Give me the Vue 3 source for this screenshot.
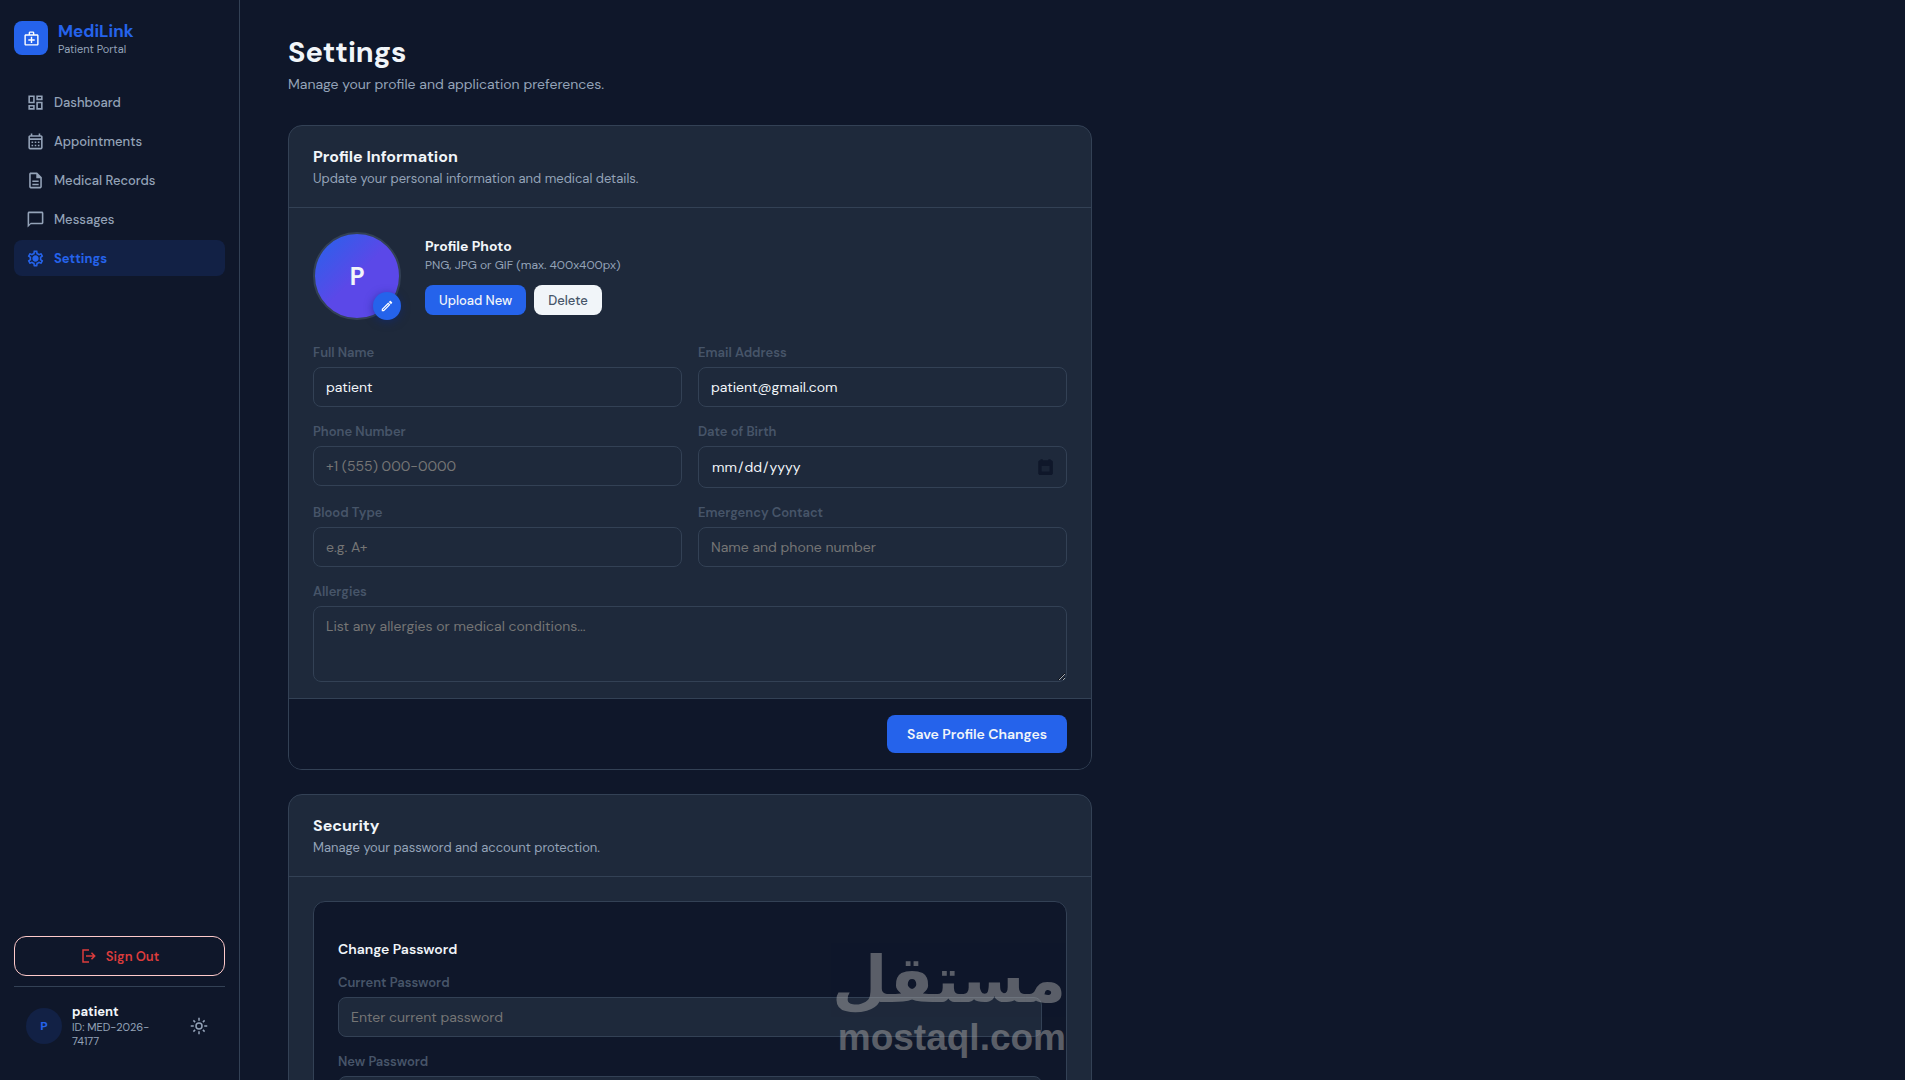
<template>
  <div class="layout">
    <aside class="sidebar">
      <div class="brand">
        <div class="brand-logo">
          <svg viewBox="0 0 24 24" width="17" height="17"><path :d="icons.medical" /></svg>
        </div>
        <div>
          <div class="brand-name">MediLink</div>
          <div class="brand-sub">Patient Portal</div>
        </div>
      </div>

      <nav class="nav">
        <a
          v-for="item in navItems"
          :key="item.label"
          href="#"
          class="nav-item"
          :class="{ active: item.active }"
        >
          <svg viewBox="0 0 24 24" width="19" height="19"><path :d="item.icon" /></svg>
          <span>{{ item.label }}</span>
        </a>
      </nav>

      <button type="button" class="sign-out">
        <svg viewBox="0 0 24 24" width="18" height="18"><path :d="icons.logout" /></svg>
        <span>Sign Out</span>
      </button>

      <div class="user">
        <div class="user-avatar">P</div>
        <div class="user-info">
          <div class="user-name">patient</div>
          <div class="user-id">ID: MED-2026-74177</div>
        </div>
        <button type="button" class="theme-toggle" aria-label="Toggle theme">
          <svg class="icon-line" viewBox="0 0 24 24" width="18" height="18">
            <circle cx="12" cy="12" r="4" />
            <path d="M12 1v4M12 19v4M1 12h4M19 12h4M4.500 4.500l2.300 2.300M17.200 17.200l2.300 2.300M19.500 4.500l-2.300 2.300M6.800 17.200l-2.300 2.300" />
          </svg>
        </button>
      </div>
    </aside>

    <main class="main">
      <div class="content">
        <h1>Settings</h1>
        <p class="page-sub">Manage your profile and application preferences.</p>

        <section class="card">
          <header class="card-header">
            <h2>Profile Information</h2>
            <p>Update your personal information and medical details.</p>
          </header>

          <div class="card-body">
            <div class="photo-row">
              <div class="photo">
                P
                <button type="button" class="photo-edit" aria-label="Edit photo">
                  <svg viewBox="0 0 24 24" width="14" height="14"><path :d="icons.edit" /></svg>
                </button>
              </div>
              <div>
                <h3 class="photo-title">Profile Photo</h3>
                <p class="photo-hint">PNG, JPG or GIF (max. 400x400px)</p>
                <div class="photo-actions">
                  <button type="button" class="btn btn-primary">Upload New</button>
                  <button type="button" class="btn btn-light">Delete</button>
                </div>
              </div>
            </div>

            <div class="form-grid">
              <div v-for="field in fields" :key="field.id" class="field">
                <label :for="field.id">{{ field.label }}</label>
                <input
                  :id="field.id"
                  v-model="profile[field.id]"
                  :type="field.type"
                  :placeholder="field.placeholder"
                />
              </div>
              <div class="field field-full">
                <label for="allergies">Allergies</label>
                <textarea
                  id="allergies"
                  v-model="profile.allergies"
                  placeholder="List any allergies or medical conditions..."
                ></textarea>
              </div>
            </div>
          </div>

          <footer class="card-footer">
            <button type="button" class="btn btn-primary btn-save">Save Profile Changes</button>
          </footer>
        </section>

        <section class="card">
          <header class="card-header">
            <h2>Security</h2>
            <p>Manage your password and account protection.</p>
          </header>

          <div class="card-body">
            <div class="password-box">
              <h3>Change Password</h3>
              <div class="password-fields">
                <div class="field">
                  <label for="currentPassword">Current Password</label>
                  <input id="currentPassword" type="password" placeholder="Enter current password" />
                </div>
                <div class="field">
                  <label for="newPassword">New Password</label>
                  <input id="newPassword" type="password" placeholder="Enter new password" />
                </div>
              </div>

              <div class="watermark">
                <div class="watermark-ar" lang="ar" dir="rtl">مستقل</div>
                <div class="watermark-en">mostaql.com</div>
              </div>
            </div>
          </div>
        </section>
      </div>
    </main>
  </div>
</template>

<script setup>
import { reactive } from 'vue'

const icons = {
  medical:
    'M20 6h-4V4c0-1.1-.9-2-2-2h-4c-1.1 0-2 .9-2 2v2H4c-1.1 0-2 .9-2 2v12c0 1.1.9 2 2 2h16c1.1 0 2-.9 2-2V8c0-1.1-.9-2-2-2zM10 4h4v2h-4V4zm10 16H4V8h16v12zM13 9.5h-2V13H7.500v2H11v3.500h2V15h3.500v-2H13z',
  dashboard:
    'M19 5v2h-4V5h4M9 5v6H5V5h4m10 8v6h-4v-6h4M9 17v2H5v-2h4M21 3h-8v6h8V3zM11 3H3v10h8V3zm10 8h-8v10h8V11zm-10 4H3v6h8v-6z',
  calendar:
    'M19 4h-1V2h-2v2H8V2H6v2H5c-1.11 0-1.99.9-1.99 2L3 20c0 1.1.89 2 2 2h14c1.1 0 2-.9 2-2V6c0-1.1-.9-2-2-2zm0 16H5V10h14v10zm0-12H5V6h14v2zM9 14H7v-2h2v2zm4 0h-2v-2h2v2zm4 0h-2v-2h2v2zm-8 4H7v-2h2v2zm4 0h-2v-2h2v2zm4 0h-2v-2h2v2z',
  records:
    'M8 16h8v2H8zm0-4h8v2H8zm6-10H6c-1.1 0-2 .9-2 2v16c0 1.1.89 2 1.990 2H18c1.1 0 2-.9 2-2V8l-6-6zm4 18H6V4h7v5h5v11z',
  messages:
    'M20 2H4c-1.1 0-2 .9-2 2v18l4-4h14c1.1 0 2-.9 2-2V4c0-1.1-.9-2-2-2zm0 14H6l-2 2V4h16v12z',
  settings:
    'M19.43 12.98c.04-.32.07-.64.07-.98 0-.34-.03-.66-.07-.98l2.11-1.65c.19-.15.24-.42.12-.64l-2-3.46c-.09-.16-.26-.25-.44-.25-.06 0-.12.01-.17.03l-2.49 1c-.52-.4-1.08-.73-1.69-.98l-.38-2.65C14.46 2.18 14.25 2 14 2h-4c-.25 0-.46.18-.49.42l-.38 2.65c-.61.25-1.17.59-1.69.98l-2.49-1c-.06-.02-.12-.03-.18-.03-.17 0-.34.09-.43.25l-2 3.46c-.13.22-.07.49.12.64l2.11 1.65c-.04.32-.07.65-.07.98 0 .33.03.66.07.98l-2.11 1.65c-.19.15-.24.42-.12.64l2 3.46c.09.16.26.25.44.25.06 0 .12-.01.17-.03l2.49-1c.52.4 1.08.73 1.69.98l.38 2.65c.03.24.24.42.49.42h4c.25 0 .46-.18.49-.42l.38-2.65c.61-.25 1.17-.59 1.69-.98l2.49 1c.06.02.12.03.18.03.17 0 .34-.09.43-.25l2-3.46c.12-.22.07-.49-.12-.64l-2.11-1.65zm-1.98-1.71c.04.31.05.52.05.73 0 .21-.02.43-.05.73l-.14 1.13.89.7 1.08.84-.7 1.21-1.27-.51-1.04-.42-.9.68c-.43.32-.84.56-1.25.73l-1.06.43-.16 1.13-.2 1.35h-1.4l-.19-1.35-.16-1.13-1.06-.43c-.43-.18-.83-.41-1.23-.71l-.91-.7-1.06.43-1.27.51-.7-1.21 1.08-.84.89-.7-.14-1.13c-.03-.31-.05-.54-.05-.74s.02-.43.05-.73l.14-1.13-.89-.7-1.08-.84.7-1.21 1.27.51 1.04.42.9-.68c.43-.32.84-.56 1.25-.73l1.06-.43.16-1.13.2-1.35h1.39l.19 1.35.16 1.13 1.06.43c.43.18.83.41 1.23.71l.91.7 1.06-.43 1.27-.51.7 1.21-1.07.85-.89.7.14 1.13zM12 8c-2.21 0-4 1.79-4 4s1.79 4 4 4 4-1.79 4-4-1.79-4-4-4z',
  logout: 'M3 3h9v2H5v14h7v2H3zM16 7l5 5-5 5-1.400-1.400L17.200 13H8v-2h9.200l-2.600-2.600z',
  edit:
    'M14.060 9.020l.92.92L5.920 19H5v-.92l9.060-9.060M17.660 3c-.25 0-.51.1-.7.290l-1.830 1.830 3.750 3.750 1.830-1.830c.39-.39.39-1.020 0-1.410l-2.340-2.340c-.2-.2-.45-.29-.71-.29zm-3.600 3.190L3 17.250V21h3.750L17.810 9.940l-3.750-3.750z'
}

const navItems = [
  { label: 'Dashboard', icon: icons.dashboard },
  { label: 'Appointments', icon: icons.calendar },
  { label: 'Medical Records', icon: icons.records },
  { label: 'Messages', icon: icons.messages },
  { label: 'Settings', icon: icons.settings, active: true }
]

const profile = reactive({
  fullName: 'patient',
  email: 'patient@gmail.com',
  phone: '',
  birthDate: '',
  bloodType: '',
  emergency: '',
  allergies: ''
})

const fields = [
  { id: 'fullName', label: 'Full Name', type: 'text' },
  { id: 'email', label: 'Email Address', type: 'email' },
  { id: 'phone', label: 'Phone Number', type: 'tel', placeholder: '+1 (555) 000-0000' },
  { id: 'birthDate', label: 'Date of Birth', type: 'date' },
  { id: 'bloodType', label: 'Blood Type', type: 'text', placeholder: 'e.g. A+' },
  { id: 'emergency', label: 'Emergency Contact', type: 'text', placeholder: 'Name and phone number' }
]
</script>

<style>
body {
  margin: 0;
  background: #0f172a;
}
</style>

<style scoped>
* {
  box-sizing: border-box;
}

.layout {
  display: flex;
  height: 100vh;
  background: #0f172a;
  color: #f1f5f9;
  font-family: 'DM Sans', Inter, sans-serif;
  font-size: 13px;
}

h1,
h2,
h3,
p {
  margin: 0;
}

button,
input,
textarea {
  font-family: inherit;
}

button {
  cursor: pointer;
}

svg {
  display: block;
  flex-shrink: 0;
  fill: currentColor;
}

.icon-line {
  fill: none;
  stroke: currentColor;
  stroke-width: 2;
}

/* sidebar */
.sidebar {
  display: flex;
  flex-direction: column;
  flex-shrink: 0;
  width: 240px;
  padding: 20px 14px;
  border-right: 1px solid #334155;
}

.brand {
  display: flex;
  align-items: center;
  gap: 10px;
  margin-bottom: 28px;
}

.brand-logo {
  display: flex;
  align-items: center;
  justify-content: center;
  width: 34px;
  height: 34px;
  border-radius: 8px;
  background: #2563eb;
  color: #fff;
}

.brand-name {
  color: #2563eb;
  font-size: 17px;
  font-weight: 700;
  line-height: 22px;
}

.brand-sub {
  color: #94a3b8;
  font-size: 11px;
  line-height: 14px;
}

.nav {
  display: flex;
  flex: 1;
  flex-direction: column;
  gap: 3px;
}

.nav-item {
  display: flex;
  align-items: center;
  gap: 9px;
  height: 36px;
  padding: 0 12px;
  border-radius: 8px;
  color: #94a3b8;
  font-weight: 500;
  text-decoration: none;
}

.nav-item.active {
  background: #122145;
  color: #2563eb;
  font-weight: 700;
}

.sign-out {
  display: flex;
  align-items: center;
  justify-content: center;
  gap: 8px;
  height: 40px;
  border: 1px solid #fecaca;
  border-radius: 12px;
  background: transparent;
  color: #dc3c3c;
  font-size: 13px;
  font-weight: 600;
}

.user {
  display: flex;
  align-items: center;
  gap: 10px;
  margin-top: 10px;
  padding: 16px 12px 12px;
  border-top: 1px solid #334155;
}

.user-avatar {
  display: flex;
  align-items: center;
  justify-content: center;
  flex-shrink: 0;
  width: 36px;
  height: 36px;
  border-radius: 50%;
  background: #122145;
  color: #2563eb;
  font-size: 12px;
  font-weight: 700;
}

.user-info {
  flex: 1;
}

.user-name {
  font-weight: 700;
  line-height: 17px;
}

.user-id {
  color: #94a3b8;
  font-size: 11px;
  line-height: 14px;
}

.theme-toggle {
  padding: 5px;
  border: 0;
  background: transparent;
  color: #94a3b8;
}

/* main */
.main {
  flex: 1;
  overflow-y: auto;
  scrollbar-width: none;
}

.content {
  max-width: 900px;
  padding: 32px 48px;
}

h1 {
  font-size: 29px;
  font-weight: 700;
  line-height: 40px;
}

.page-sub {
  margin-bottom: 29px;
  color: #94a3b8;
  font-size: 14px;
  line-height: 24px;
}

.card {
  margin-bottom: 24px;
  overflow: hidden;
  border: 1px solid #334155;
  border-radius: 14px;
  background: #1e293b;
}

.card-header {
  padding: 20px 24px 18px;
  border-bottom: 1px solid #334155;
}

.card-header h2 {
  font-size: 16px;
  font-weight: 700;
  line-height: 22px;
}

.card-header p {
  color: #94a3b8;
  line-height: 21px;
}

.card-body {
  padding: 24px 24px 16px;
}

.card-footer {
  display: flex;
  justify-content: flex-end;
  padding: 16px 24px;
  border-top: 1px solid #334155;
  background: #0f172a;
}

.photo-row {
  display: flex;
  align-items: center;
  gap: 24px;
  margin-bottom: 24px;
}

.photo {
  position: relative;
  display: flex;
  align-items: center;
  justify-content: center;
  width: 88px;
  height: 88px;
  border: 2px solid #334155;
  border-radius: 50%;
  background: linear-gradient(135deg, #2563eb, #5b48e8 50%, #5b48e8);
  font-size: 24px;
  font-weight: 700;
}

.photo-edit {
  position: absolute;
  right: -2px;
  bottom: -2px;
  display: flex;
  align-items: center;
  justify-content: center;
  width: 28px;
  height: 28px;
  padding: 0;
  border: 0;
  border-radius: 50%;
  background: #2563eb;
  box-shadow: 0 2px 8px rgba(15, 40, 120, 0.6);
  color: #fff;
}

.photo-title {
  font-size: 14px;
  font-weight: 700;
  line-height: 18px;
}

.photo-hint {
  margin-bottom: 10px;
  color: #94a3b8;
  font-size: 12px;
  line-height: 20px;
}

.photo-actions {
  display: flex;
  gap: 8px;
}

.btn {
  height: 30px;
  padding: 0 14px;
  border: 0;
  border-radius: 8px;
  font-size: 13px;
  font-weight: 500;
}

.btn-primary {
  background: #2563eb;
  color: #f1f5f9;
}

.btn-light {
  background: #f1f5f9;
  color: #475569;
}

.btn-save {
  height: 38px;
  padding: 0 20px;
  font-size: 14px;
  font-weight: 600;
}

.form-grid {
  display: grid;
  grid-template-columns: 1fr 1fr;
  align-items: start;
  gap: 16px;
}

.field {
  display: flex;
  flex-direction: column;
  gap: 6px;
}

.field-full {
  grid-column: 1 / -1;
}

.field label {
  color: #475569;
  font-size: 13px;
  font-weight: 600;
  line-height: 17px;
}

.field input,
.field textarea {
  width: 100%;
  height: 40px;
  padding: 0 12px;
  border: 1px solid #334155;
  border-radius: 8px;
  background: #1e293b;
  color: #f1f5f9;
  font-size: 14px;
}

.field input[type='date'] {
  height: 42px;
}

.field input::-webkit-calendar-picker-indicator {
  background: url("data:image/svg+xml,%3Csvg xmlns='http://www.w3.org/2000/svg' viewBox='0 0 16 16'%3E%3Cpath d='M4 1h2v1h5V1h2v1h1l1 1v11l-1 1H3l-1-1V3l1-1h1z' fill='%230f172a'/%3E%3Cpath d='M5 7h7v5H5z' fill='%231a2436'/%3E%3C/svg%3E")
    center / contain no-repeat;
}

.field textarea {
  height: 76px;
  padding: 10px 12px;
  line-height: 18px;
  resize: vertical;
}

.field input::placeholder,
.field textarea::placeholder {
  color: #757575;
}

.password-box {
  position: relative;
  padding: 37px 24px 24px;
  border: 1px solid #334155;
  border-radius: 12px;
  background: #0f172a;
}

.password-box h3 {
  margin-bottom: 15px;
  font-size: 14px;
  font-weight: 600;
  line-height: 20px;
}

.password-fields {
  display: flex;
  flex-direction: column;
  gap: 16px;
}

.watermark {
  position: absolute;
  top: 40px;
  right: 0;
  color: #a5a5a5;
  font-weight: 700;
  opacity: 0.5;
  pointer-events: none;
  text-align: right;
}

.watermark-ar {
  font-family: 'DejaVu Sans', sans-serif;
  font-size: 64px;
  line-height: 76px;
}

.watermark-en {
  font-family: 'Liberation Sans', sans-serif;
  font-size: 37px;
  line-height: 40px;
}
</style>
